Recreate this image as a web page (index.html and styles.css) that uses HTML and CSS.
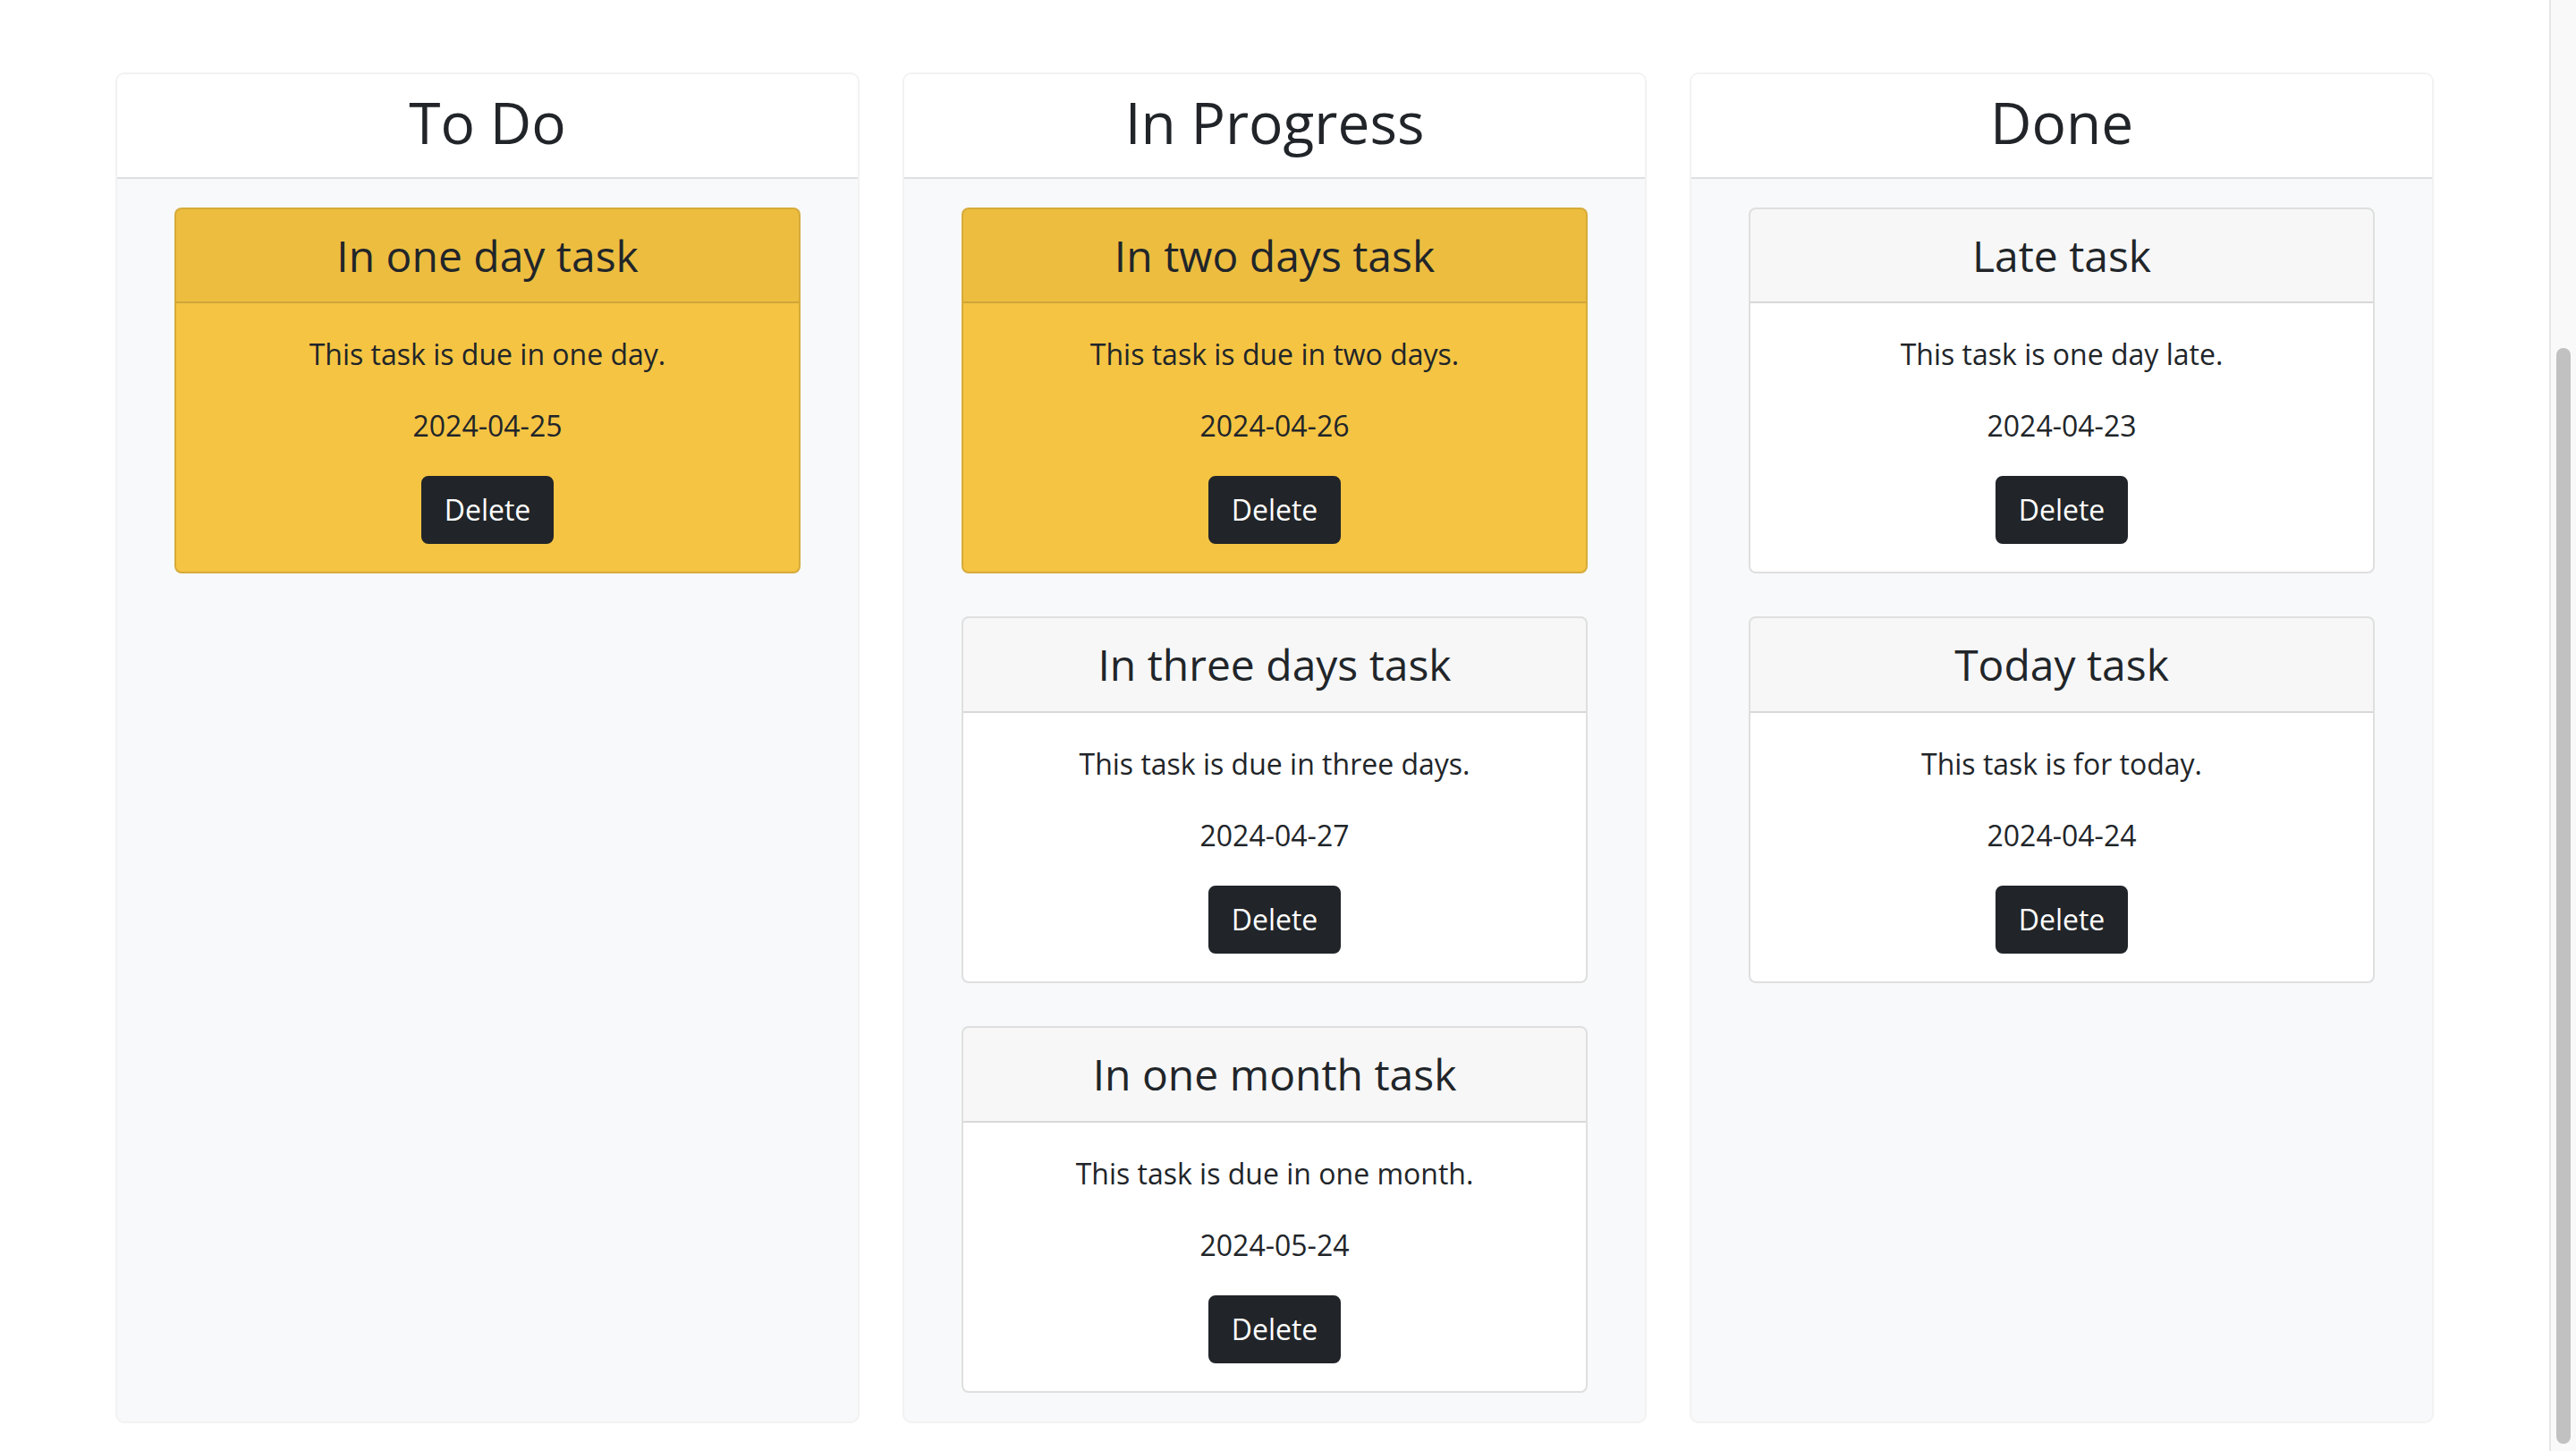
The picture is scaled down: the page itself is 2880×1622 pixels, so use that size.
FILE: index.html
```html
<!DOCTYPE html>
<html lang="en">
<head>
<meta charset="utf-8">
<title>Task Board</title>
<link rel="stylesheet" href="styles.css">
</head>
<body>
<div class="viewport">
  <main class="board">
    <section class="column">
      <header class="column-header"><h2>To Do</h2></header>
      <div class="column-body">
        <article class="task task-warning">
          <div class="task-header"><h4>In one day task</h4></div>
          <div class="task-body">
            <p>This task is due in one day.</p>
            <p>2024-04-25</p>
            <button class="btn">Delete</button>
          </div>
        </article>
      </div>
    </section>

    <section class="column">
      <header class="column-header"><h2>In Progress</h2></header>
      <div class="column-body">
        <article class="task task-warning">
          <div class="task-header"><h4>In two days task</h4></div>
          <div class="task-body">
            <p>This task is due in two days.</p>
            <p>2024-04-26</p>
            <button class="btn">Delete</button>
          </div>
        </article>
        <article class="task">
          <div class="task-header"><h4>In three days task</h4></div>
          <div class="task-body">
            <p>This task is due in three days.</p>
            <p>2024-04-27</p>
            <button class="btn">Delete</button>
          </div>
        </article>
        <article class="task">
          <div class="task-header"><h4>In one month task</h4></div>
          <div class="task-body">
            <p>This task is due in one month.</p>
            <p>2024-05-24</p>
            <button class="btn">Delete</button>
          </div>
        </article>
      </div>
    </section>

    <section class="column">
      <header class="column-header"><h2>Done</h2></header>
      <div class="column-body">
        <article class="task">
          <div class="task-header"><h4>Late task</h4></div>
          <div class="task-body">
            <p>This task is one day late.</p>
            <p>2024-04-23</p>
            <button class="btn">Delete</button>
          </div>
        </article>
        <article class="task">
          <div class="task-header"><h4>Today task</h4></div>
          <div class="task-body">
            <p>This task is for today.</p>
            <p>2024-04-24</p>
            <button class="btn">Delete</button>
          </div>
        </article>
      </div>
    </section>
  </main>
</div>
<div class="scrollbar"><div class="scrollbar-thumb"></div></div>
</body>
</html>
```

FILE: styles.css
```css
html, body {
  margin: 0;
  height: 100%;
}

body {
  display: flex;
  overflow: hidden;
  background: #ffffff;
  color: #212529;
  font-family: "Open Sans", "Noto Sans", sans-serif;
}

.viewport {
  flex: 1;
  min-width: 0;
}

.board {
  width: 2592px;
  margin: 81px auto 0;
  display: grid;
  grid-template-columns: repeat(3, 1fr);
  gap: 48px;
  align-items: stretch;
}

.column {
  display: flex;
  flex-direction: column;
  background: #f8f9fa;
  border: 2px solid #f2f2f2;
  border-radius: 10px;
  overflow: hidden;
}

.column-header {
  background: #ffffff;
  border-bottom: 2px solid #dedfe0;
  padding: 16px 32px 22px;
  text-align: center;
}

.column-header h2 {
  margin: 0;
  font-size: 64px;
  font-weight: 400;
  line-height: 1.2;
}

.column-body {
  flex: 1;
  display: flex;
  flex-direction: column;
  gap: 48px;
  padding: 32px 64px;
}

.task {
  background: #ffffff;
  border: 2px solid rgba(0, 0, 0, 0.125);
  border-radius: 8px;
  overflow: hidden;
  text-align: center;
}

.task-warning {
  background: #f5c443;
}

.task-header {
  background: rgba(0, 0, 0, 0.03);
  border-bottom: 2px solid rgba(0, 0, 0, 0.125);
  padding: 23px 40px;
}

.task-header h4 {
  margin: 0;
  font-size: 48px;
  font-weight: 400;
  line-height: 1.2;
}

.task-body {
  display: flex;
  flex-direction: column;
  align-items: center;
  padding: 33px 32px 31px;
}

.task-body p {
  margin: 0 0 32px;
  font-size: 32px;
  line-height: 1.5;
}

.btn {
  font-family: inherit;
  font-size: 32px;
  font-weight: 400;
  line-height: 1.5;
  padding: 12px 24px;
  color: #ffffff;
  background: #212529;
  border: 2px solid #212529;
  border-radius: 8px;
  cursor: pointer;
}

.scrollbar {
  flex: none;
  width: 28px;
  background: #f9f9f9;
  border-left: 2px solid #e7e7e7;
  padding-top: 389px;
}

.scrollbar-thumb {
  width: 16px;
  height: 1225px;
  margin-left: 6px;
  background: #c1c1c1;
  border-radius: 8px;
}
```
